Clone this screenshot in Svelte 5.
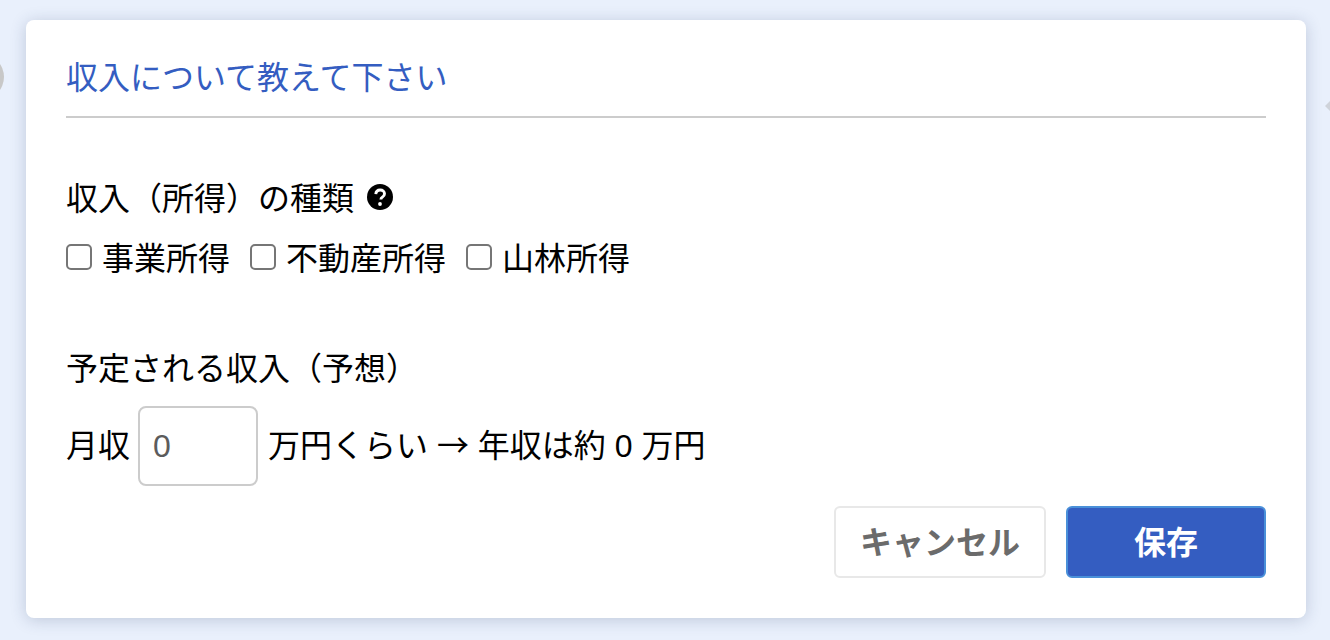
<script>
  let monthly = $state(0);
  const kinds = ['事業所得', '不動産所得', '山林所得'];
</script>

<div class="page">
  <!-- bits of the page behind the dialog -->
  <span class="avatar"></span>
  <span class="arrow"></span>

  <div class="card">
    <h2 class="title">収入について教えて下さい</h2>

    <section class="kinds">
      <div class="label">
        収入（所得）の種類
        <svg class="help" viewBox="0 0 26 26" aria-hidden="true">
          <circle cx="13" cy="13" r="13" fill="#000" />
          <path d="M8.8 10.2c.2-2.7 2-4.2 4.4-4.2 2.500 0 4.300 1.500 4.300 3.700 0 1.700-.9 2.600-2.100 3.400-1.100.7-1.500 1.200-1.500 2.400" fill="none" stroke="#fff" stroke-width="2.900" />
          <circle cx="13" cy="20" r="1.900" fill="#fff" />
        </svg>
      </div>
      <div class="checks">
        {#each kinds as kind}
          <label class="check">
            <input type="checkbox" />
            <span>{kind}</span>
          </label>
        {/each}
      </div>
    </section>

    <section class="income">
      <div class="label">予定される収入（予想）</div>
      <div class="row">
        <span class="unit">月収</span>
        <input class="amount" type="text" bind:value={monthly} />
        <span class="unit result">万円くらい <span class="to">→</span> 年収は約 {monthly * 12} 万円</span>
      </div>
    </section>

    <div class="actions">
      <button class="btn cancel">キャンセル</button>
      <button class="btn save">保存</button>
    </div>
  </div>
</div>

<style>
  :global(body) {
    margin: 0;
    background: #e9f0fc;
  }

  .page {
    position: relative;
    width: 1330px;
    height: 640px;
    box-sizing: border-box;
    padding: 20px 24px 22px 26px;
    overflow: hidden;
    font-family: "Liberation Sans", "Noto Sans CJK JP", sans-serif;
    color: #000;
  }

  .avatar {
    position: absolute;
    left: -42px;
    top: 54px;
    width: 46px;
    height: 46px;
    border-radius: 50%;
    background: #c8c8c8;
  }
  .arrow {
    position: absolute;
    right: 0;
    top: 101px;
    border: 5px solid transparent;
    border-left: 0;
    border-right-color: #cfd3da;
  }

  .card {
    position: relative;
    box-sizing: border-box;
    width: 1280px;
    height: 598px;
    padding: 40px 40px 0;
    background: #fff;
    border-radius: 8px;
    box-shadow: 0 2px 16px rgba(40, 60, 100, 0.22);
  }

  .title {
    margin: 0;
    height: 56px;
    font-size: 32px;
    font-weight: 400;
    line-height: 36px;
    color: #345dc1;
    border-bottom: 2px solid #ccc;
  }

  .kinds {
    margin-top: 58px;
  }
  .label {
    display: flex;
    align-items: center;
    height: 40px;
    font-size: 32px;
  }
  .help {
    width: 26px;
    height: 26px;
    margin: 2px 0 0 13px;
  }
  .checks {
    display: flex;
    gap: 20px;
    margin-top: 20px;
  }
  .check {
    display: flex;
    align-items: center;
    gap: 10px;
    height: 40px;
    font-size: 32px;
  }
  .check input {
    appearance: none;
    box-sizing: border-box;
    width: 26px;
    height: 26px;
    margin: 2px 0 0;
    background: #fff;
    border: 2px solid #767676;
    border-radius: 5px;
  }

  .income {
    margin-top: 70px;
  }
  .row {
    display: flex;
    align-items: center;
    gap: 8px;
    margin-top: 20px;
    font-size: 32px;
  }
  .unit {
    padding-bottom: 6px;
  }
  .result {
    margin-left: 2px;
  }
  .to {
    font-family: "Noto Sans CJK JP", sans-serif;
  }
  .amount {
    box-sizing: border-box;
    width: 120px;
    height: 80px;
    padding: 0 13px;
    font: inherit;
    color: #5c5c5c;
    border: 2px solid #ccc;
    border-radius: 8px;
    outline: none;
  }

  .actions {
    display: flex;
    justify-content: flex-end;
    gap: 20px;
    margin-top: 20px;
  }
  .btn {
    box-sizing: border-box;
    height: 72px;
    padding: 0 0 5px;
    font-family: inherit;
    font-size: 32px;
    font-weight: 700;
    border-radius: 6px;
  }
  .cancel {
    width: 212px;
    color: #6b6b6b;
    background: #fff;
    border: 2px solid #e8e8e8;
  }
  .save {
    width: 200px;
    color: #fff;
    background: #345dc1;
    border: 2px solid #4a90d9;
  }
</style>
